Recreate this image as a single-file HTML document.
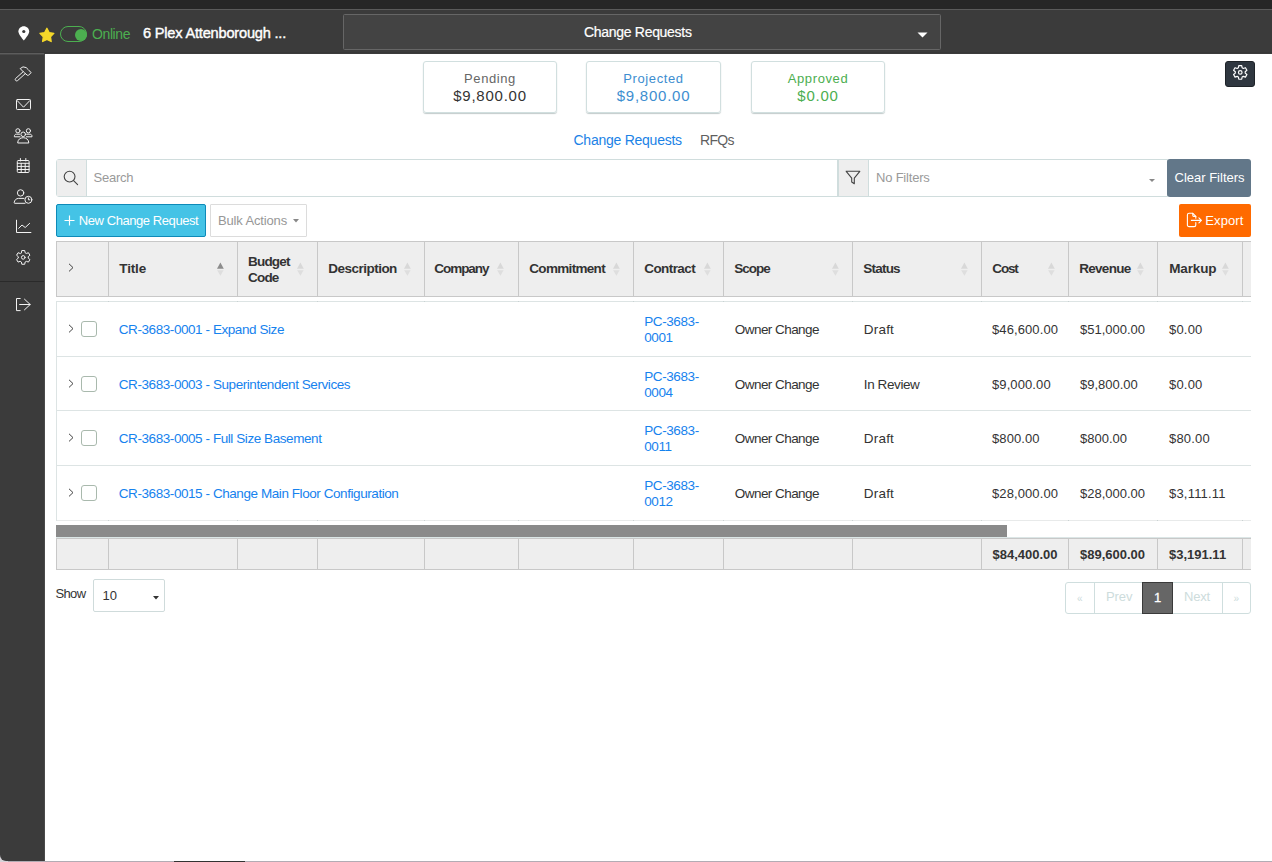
<!DOCTYPE html>
<html><head><meta charset="utf-8">
<style>
html,body{margin:0;padding:0;}
body{width:1272px;height:862px;overflow:hidden;position:relative;background:#fff;font-family:"Liberation Sans", sans-serif;}
.a{position:absolute;box-sizing:border-box;}
.t{position:absolute;white-space:nowrap;font-family:"Liberation Sans", sans-serif;}
svg{position:absolute;overflow:visible;}
</style></head><body>
<div class="a" style="left:0px;top:0px;width:1272px;height:9px;background:#262626"></div>
<div class="a" style="left:0px;top:9px;width:1272px;height:1px;background:#5a5a5a"></div>
<div class="a" style="left:0px;top:10px;width:1272px;height:44px;background:#3b3b3b"></div>
<div class="a" style="left:0px;top:52px;width:1272px;height:1px;background:#373737"></div>
<svg style="left:17.6px;top:25.8px" width="12" height="15" viewBox="0 0 12 15"><path d="M5.8 0.3C2.8 0.3 0.4 2.6 0.4 5.6 0.4 8.6 5.8 14.5 5.8 14.5S11.2 8.6 11.2 5.6C11.2 2.6 8.8 0.3 5.8 0.3Z" fill="#fff"/><circle cx="5.8" cy="5.5" r="1.6" fill="#3b3b3b"/></svg>
<svg style="left:38.5px;top:27px" width="16" height="16" viewBox="0 0 16 16"><path d="M7.90 1.30 L10.13 5.53 L14.84 6.34 L11.51 9.77 L12.19 14.51 L7.90 12.40 L3.61 14.51 L4.29 9.77 L0.96 6.34 L5.67 5.53Z" fill="#f5d82a" stroke="#f5d82a" stroke-width="1.3" stroke-linejoin="round"/></svg>
<div class="a" style="left:60px;top:26px;width:27px;height:16px;border:1.3px solid #4caf50;border-radius:8px"></div>
<div class="a" style="left:74.5px;top:28.5px;width:12.0px;height:12.0px;background:#4caf50;border-radius:50%"></div>
<div class="t " style="left:92px;top:27.15px;font-size:14px;line-height:14px;color:#4caf50;font-weight:normal;letter-spacing:-0.4px;">Online</div>
<div class="t " style="left:143px;top:25.64px;font-size:14.6px;line-height:14.6px;color:#ffffff;font-weight:normal;letter-spacing:-0.2px;-webkit-text-stroke:0.4px #fff;">6 Plex Attenborough ...</div>
<div class="a" style="left:343px;top:14px;width:598px;height:36px;background:#434343;border:1px solid #666;border-radius:1.5px"></div>
<div class="t " style="left:584px;top:25.15px;font-size:14px;line-height:14px;color:#ffffff;font-weight:normal;letter-spacing:-0.3px;-webkit-text-stroke:0.2px #fff;">Change Requests</div>
<svg style="left:917px;top:32px" width="11" height="6" viewBox="0 0 11 6"><path d="M0.5 0.5H10.5L5.5 5.5Z" fill="#fff"/></svg>
<div class="a" style="left:0px;top:856px;width:10px;height:6px;background:#d6d3d8"></div>
<div class="a" style="left:0px;top:53px;width:44px;height:808px;background:#3b3b3b;border-bottom-left-radius:6px"></div>
<div class="a" style="left:0px;top:53px;width:44px;height:1px;background:#5c5c5c"></div>
<div class="a" style="left:0px;top:54px;width:44px;height:1px;background:#4a4a4a"></div>
<div class="a" style="left:44px;top:54px;width:1px;height:807px;background:#4a4a4a"></div>
<div class="a" style="left:0px;top:281px;width:44px;height:1px;background:#2a2a2a"></div>
<svg style="left:12px;top:63px" width="24" height="21" viewBox="0 0 24 21"><g fill="none" stroke="#f2f2f2" stroke-width="1" stroke-linecap="round" stroke-linejoin="round"><path d="M11.2 8.7L3.5 15.6Q2.8 16.6 3.7 17.5Q4.6 18.3 5.6 17.6L13.3 10.6"/><path d="M11.2 8.7L8.2 5.6Q10.8 2.6 14.2 4.6L16.3 6.7 17 7.6 19.2 9.5 16.5 12.3 15.5 12.3 13.3 10.6Z"/></g></svg>
<svg style="left:12px;top:94px" width="24" height="22" viewBox="0 0 24 22"><g fill="none" stroke="#f2f2f2" stroke-width="1" stroke-linecap="round" stroke-linejoin="round"><rect x="4.5" y="5.5" width="14" height="10" rx="0.8"/><path d="M5.2 6.6L11.5 13.2 17.8 6.6"/></g></svg>
<svg style="left:10px;top:124px" width="26" height="24" viewBox="0 0 26 24"><g fill="none" stroke="#f2f2f2" stroke-width="1" stroke-linecap="round" stroke-linejoin="round"><circle cx="7.9" cy="6.8" r="2.1"/><circle cx="18.4" cy="6.8" r="2.1"/><circle cx="13.2" cy="10.3" r="2.3"/><path d="M9.6 10.2H6.3C5.2 10.2 4.4 11 4.4 12.2V12.8H10"/><path d="M16.6 10.2H20C21.1 10.2 22 11 22 12.2V12.8H16.4"/><path d="M7.7 18.6C7.7 15.6 10.2 13.7 13.2 13.7S18.8 15.6 18.8 18.6Z"/></g></svg>
<svg style="left:11px;top:154px" width="24" height="22" viewBox="0 0 24 22"><g fill="none" stroke="#f2f2f2" stroke-width="1" stroke-linecap="round" stroke-linejoin="round"><rect x="6.3" y="6.5" width="11.8" height="12" rx="1"/><path d="M9.4 4.5V7M14.8 4.5V7M6.3 9.3H18.1M6.3 12.4H18.1M6.3 15.5H18.1M10.2 9.3V18.5M14.2 9.3V18.5"/></g></svg>
<svg style="left:10px;top:185px" width="26" height="22" viewBox="0 0 26 22"><g fill="none" stroke="#f2f2f2" stroke-width="1" stroke-linecap="round" stroke-linejoin="round"><circle cx="10.6" cy="7.9" r="3.2"/><path d="M15 18.3H4.6C4.3 18.3 4.2 18 4.2 17.6C4.4 15.2 6.2 13.4 8.5 13.4H14"/><circle cx="18.4" cy="14.8" r="3.5"/><path d="M18.4 12.9V14.8H19.8"/></g></svg>
<svg style="left:11px;top:215px" width="24" height="22" viewBox="0 0 24 22"><g fill="none" stroke="#f2f2f2" stroke-width="1" stroke-linecap="round" stroke-linejoin="round"><path d="M5.5 5.2V17.5H19.9"/><path d="M7.7 13.3L11 10 14.2 12.5 18.6 8.4"/></g></svg>
<svg style="left:11px;top:246px" width="24" height="22" viewBox="0 0 24 22"><g fill="none" stroke="#f2f2f2" stroke-width="1" stroke-linecap="round" stroke-linejoin="round"><path d="M10.38 6.76 L10.79 4.55 L13.71 4.55 L14.12 6.76 L15.33 7.46 L17.45 6.72 L18.91 9.24 L17.20 10.70 L17.20 12.10 L18.91 13.56 L17.45 16.08 L15.33 15.34 L14.12 16.04 L13.71 18.25 L10.79 18.25 L10.38 16.04 L9.17 15.34 L7.05 16.08 L5.59 13.56 L7.30 12.10 L7.30 10.70 L5.59 9.24 L7.05 6.72 L9.17 7.46Z"/><circle cx="12.25" cy="11.4" r="1.8"/></g></svg>
<svg style="left:11px;top:293px" width="24" height="22" viewBox="0 0 24 22"><g fill="none" stroke="#f2f2f2" stroke-width="1" stroke-linecap="round" stroke-linejoin="round"><path d="M9.2 5.5H5.5V17.6H9.2"/><path d="M8.6 11.5H19.2M13.5 6.2L19.2 11.5 13.5 16.8"/></g></svg>
<div class="a" style="left:1225px;top:61px;width:30px;height:26px;background:#2f3740;border:1px solid #1e2328;border-radius:3px"></div>
<svg style="left:1228px;top:60.5px" width="24" height="22" viewBox="0 0 24 22"><g fill="none" stroke="#fff" stroke-width="1.2" stroke-linejoin="round"><path d="M10.38 6.76 L10.79 4.55 L13.71 4.55 L14.12 6.76 L15.33 7.46 L17.45 6.72 L18.91 9.24 L17.20 10.70 L17.20 12.10 L18.91 13.56 L17.45 16.08 L15.33 15.34 L14.12 16.04 L13.71 18.25 L10.79 18.25 L10.38 16.04 L9.17 15.34 L7.05 16.08 L5.59 13.56 L7.30 12.10 L7.30 10.70 L5.59 9.24 L7.05 6.72 L9.17 7.46Z"/><circle cx="12.25" cy="11.4" r="1.8"/></g></svg>
<div class="a" style="left:423px;top:61px;width:134px;height:52px;border:1px solid #d1dfdf;border-radius:3px;box-shadow:0 1px 1px rgba(80,105,105,0.35)"></div>
<div class="t" style="left:423px;width:134px;text-align:center;top:71.60px;font-size:13px;line-height:13px;color:#666666;letter-spacing:0.6px">Pending</div>
<div class="t" style="left:423px;width:134px;text-align:center;top:88.20px;font-size:15px;line-height:15px;color:#333333;letter-spacing:0.75px">$9,800.00</div>
<div class="a" style="left:586px;top:61px;width:135px;height:52px;border:1px solid #d1dfdf;border-radius:3px;box-shadow:0 1px 1px rgba(80,105,105,0.35)"></div>
<div class="t" style="left:586px;width:135px;text-align:center;top:71.60px;font-size:13px;line-height:13px;color:#3d8ed0;letter-spacing:0.6px">Projected</div>
<div class="t" style="left:586px;width:135px;text-align:center;top:88.20px;font-size:15px;line-height:15px;color:#3d8ed0;letter-spacing:0.75px">$9,800.00</div>
<div class="a" style="left:751px;top:61px;width:134px;height:52px;border:1px solid #d1dfdf;border-radius:3px;box-shadow:0 1px 1px rgba(80,105,105,0.35)"></div>
<div class="t" style="left:751px;width:134px;text-align:center;top:71.60px;font-size:13px;line-height:13px;color:#4cae50;letter-spacing:0.6px">Approved</div>
<div class="t" style="left:751px;width:134px;text-align:center;top:88.20px;font-size:15px;line-height:15px;color:#4cae50;letter-spacing:0.75px">$0.00</div>
<div class="t " style="left:573.5px;top:132.75px;font-size:14px;line-height:14px;color:#1b82e6;font-weight:normal;letter-spacing:-0.25px;">Change Requests</div>
<div class="t " style="left:700px;top:132.75px;font-size:14px;line-height:14px;color:#5f5f5f;font-weight:normal;letter-spacing:-0.65px;">RFQs</div>
<div class="a" style="left:56px;top:159px;width:1112px;height:38px;border:1px solid #d0dddd;border-radius:3px 0 0 3px"></div>
<div class="a" style="left:57px;top:160px;width:30px;height:36px;background:#eeeeee;border-right:1px solid #d0dddd"></div>
<svg style="left:63px;top:170px" width="16" height="16" viewBox="0 0 16 16"><g fill="none" stroke="#444" stroke-width="1.1" stroke-linecap="round"><circle cx="6.6" cy="6.6" r="5.4"/><path d="M10.6 10.6L14.6 14.6"/></g></svg>
<div class="t " style="left:93.5px;top:170.80px;font-size:13px;line-height:13px;color:#9a9a9a;font-weight:normal;letter-spacing:-0.25px;">Search</div>
<div class="a" style="left:837px;top:160px;width:32px;height:36px;background:#eeeeee;border-left:2px solid #d0dddd;border-right:1px solid #d0dddd"></div>
<svg style="left:845px;top:170px" width="16" height="15" viewBox="0 0 16 15"><path d="M1.2 1.3H14.8L9.3 8.2V13.8L6.7 12V8.2Z" fill="none" stroke="#444" stroke-width="1.1" stroke-linejoin="round"/></svg>
<div class="t " style="left:876px;top:170.80px;font-size:13px;line-height:13px;color:#9a9a9a;font-weight:normal;letter-spacing:-0.2px;">No Filters</div>
<svg style="left:1149px;top:179px" width="6" height="3" viewBox="0 0 6 3"><path d="M0 0H6L3 3Z" fill="#888"/></svg>
<div class="a" style="left:1167px;top:159px;width:84px;height:38px;background:#627789;border-radius:3px"></div>
<div class="t " style="left:1174.5px;top:171.30px;font-size:13px;line-height:13px;color:#ffffff;font-weight:normal;letter-spacing:0px;">Clear Filters</div>
<div class="a" style="left:56px;top:204px;width:150px;height:33px;background:#44c3e6;border:1px solid #0e8ab8;border-radius:2px"></div>
<svg style="left:64px;top:215px" width="11" height="11" viewBox="0 0 11 11"><path d="M5.5 0.5V10.5M0.5 5.5H10.5" stroke="#fff" stroke-width="1.15"/></svg>
<div class="t " style="left:78.8px;top:213.80px;font-size:13px;line-height:13px;color:#ffffff;font-weight:normal;letter-spacing:-0.43px;">New Change Request</div>
<div class="a" style="left:210px;top:204px;width:97px;height:33px;border:1px solid #dcdcdc;border-radius:1px"></div>
<div class="t " style="left:218px;top:213.80px;font-size:13px;line-height:13px;color:#979797;font-weight:normal;letter-spacing:-0.15px;">Bulk Actions</div>
<svg style="left:293px;top:218.5px" width="6" height="3.5" viewBox="0 0 6 3.5"><path d="M0 0H6L3 3.5Z" fill="#888"/></svg>
<div class="a" style="left:1179px;top:204px;width:72px;height:33px;background:#ff6a00;border-radius:2px"></div>
<svg style="left:1186px;top:212px" width="17" height="16" viewBox="0 0 17 16"><g fill="none" stroke="#fff" stroke-width="1.1" stroke-linejoin="round" stroke-linecap="round"><path d="M9.8 10.6V12.9C9.8 14 9.1 14.6 8.1 14.6H3.1C2.1 14.6 1.4 14 1.4 12.9V3C1.4 1.9 2.1 1.3 3.1 1.3H6.8L9.8 4.4V6.2"/><path d="M6.8 1.3V3.6C6.8 4.1 7.1 4.4 7.6 4.4H9.8"/><path d="M5.4 8.4H15.4M12.9 5.9L15.4 8.4 12.9 10.9"/></g></svg>
<div class="t " style="left:1205.3px;top:213.80px;font-size:13px;line-height:13px;color:#ffffff;font-weight:normal;letter-spacing:0.1px;">Export</div>
<div class="a" style="left:56px;top:241px;width:1195px;height:56px;background:#eeeeee;border-top:1px solid #c8c8c8;border-bottom:1px solid #c8c8c8;border-left:1px solid #c8c8c8"></div>
<div class="a" style="left:108px;top:242px;width:1px;height:54px;background:#c8c8c8"></div>
<div class="a" style="left:237px;top:242px;width:1px;height:54px;background:#c8c8c8"></div>
<div class="a" style="left:317px;top:242px;width:1px;height:54px;background:#c8c8c8"></div>
<div class="a" style="left:424px;top:242px;width:1px;height:54px;background:#c8c8c8"></div>
<div class="a" style="left:518px;top:242px;width:1px;height:54px;background:#c8c8c8"></div>
<div class="a" style="left:633px;top:242px;width:1px;height:54px;background:#c8c8c8"></div>
<div class="a" style="left:723px;top:242px;width:1px;height:54px;background:#c8c8c8"></div>
<div class="a" style="left:852px;top:242px;width:1px;height:54px;background:#c8c8c8"></div>
<div class="a" style="left:981px;top:242px;width:1px;height:54px;background:#c8c8c8"></div>
<div class="a" style="left:1068px;top:242px;width:1px;height:54px;background:#c8c8c8"></div>
<div class="a" style="left:1157px;top:242px;width:1px;height:54px;background:#c8c8c8"></div>
<div class="a" style="left:1242px;top:242px;width:1px;height:54px;background:#c8c8c8"></div>
<svg style="left:68px;top:263px" width="6" height="10" viewBox="0 0 6 10"><path d="M1 0.8L5 4.6 1 8.4" fill="none" stroke="#3a3a3a" stroke-width="0.95"/></svg>
<div class="t " style="left:119.3px;top:262.37px;font-size:13.5px;line-height:13.5px;color:#333;font-weight:bold;letter-spacing:-0.15000000000000002px;">Title</div>
<svg style="left:216.5px;top:262px" width="7" height="14" viewBox="0 0 7 14"><path d="M0 6.7H6.8L3.4 0.4Z" fill="#8c8c8c"/><path d="M0.2 8.2H6.6L3.4 13.8Z" fill="#dedede"/></svg>
<svg style="left:296.5px;top:262px" width="7" height="14" viewBox="0 0 7 14"><path d="M0 6.7H6.8L3.4 0.4Z" fill="#d8d8d8"/><path d="M0.2 8.2H6.6L3.4 13.8Z" fill="#dedede"/></svg>
<div class="t " style="left:328.3px;top:262.37px;font-size:13.5px;line-height:13.5px;color:#333;font-weight:bold;letter-spacing:-0.52px;">Description</div>
<svg style="left:403.5px;top:262px" width="7" height="14" viewBox="0 0 7 14"><path d="M0 6.7H6.8L3.4 0.4Z" fill="#d8d8d8"/><path d="M0.2 8.2H6.6L3.4 13.8Z" fill="#dedede"/></svg>
<div class="t " style="left:434.3px;top:262.37px;font-size:13.5px;line-height:13.5px;color:#333;font-weight:bold;letter-spacing:-1.05px;">Company</div>
<svg style="left:496.5px;top:262px" width="7" height="14" viewBox="0 0 7 14"><path d="M0 6.7H6.8L3.4 0.4Z" fill="#d8d8d8"/><path d="M0.2 8.2H6.6L3.4 13.8Z" fill="#dedede"/></svg>
<div class="t " style="left:529.3px;top:262.37px;font-size:13.5px;line-height:13.5px;color:#333;font-weight:bold;letter-spacing:-0.68px;">Commitment</div>
<svg style="left:612.5px;top:262px" width="7" height="14" viewBox="0 0 7 14"><path d="M0 6.7H6.8L3.4 0.4Z" fill="#d8d8d8"/><path d="M0.2 8.2H6.6L3.4 13.8Z" fill="#dedede"/></svg>
<div class="t " style="left:644.3px;top:262.37px;font-size:13.5px;line-height:13.5px;color:#333;font-weight:bold;letter-spacing:-0.5900000000000001px;">Contract</div>
<svg style="left:703.5px;top:262px" width="7" height="14" viewBox="0 0 7 14"><path d="M0 6.7H6.8L3.4 0.4Z" fill="#d8d8d8"/><path d="M0.2 8.2H6.6L3.4 13.8Z" fill="#dedede"/></svg>
<div class="t " style="left:734.3px;top:262.37px;font-size:13.5px;line-height:13.5px;color:#333;font-weight:bold;letter-spacing:-1.0px;">Scope</div>
<svg style="left:831.5px;top:262px" width="7" height="14" viewBox="0 0 7 14"><path d="M0 6.7H6.8L3.4 0.4Z" fill="#d8d8d8"/><path d="M0.2 8.2H6.6L3.4 13.8Z" fill="#dedede"/></svg>
<div class="t " style="left:863.3px;top:262.37px;font-size:13.5px;line-height:13.5px;color:#333;font-weight:bold;letter-spacing:-0.79px;">Status</div>
<svg style="left:960.5px;top:262px" width="7" height="14" viewBox="0 0 7 14"><path d="M0 6.7H6.8L3.4 0.4Z" fill="#d8d8d8"/><path d="M0.2 8.2H6.6L3.4 13.8Z" fill="#dedede"/></svg>
<div class="t " style="left:992.3px;top:262.37px;font-size:13.5px;line-height:13.5px;color:#333;font-weight:bold;letter-spacing:-1.15px;">Cost</div>
<svg style="left:1047.5px;top:262px" width="7" height="14" viewBox="0 0 7 14"><path d="M0 6.7H6.8L3.4 0.4Z" fill="#d8d8d8"/><path d="M0.2 8.2H6.6L3.4 13.8Z" fill="#dedede"/></svg>
<div class="t " style="left:1079.3px;top:262.37px;font-size:13.5px;line-height:13.5px;color:#333;font-weight:bold;letter-spacing:-0.73px;">Revenue</div>
<svg style="left:1136.5px;top:262px" width="7" height="14" viewBox="0 0 7 14"><path d="M0 6.7H6.8L3.4 0.4Z" fill="#d8d8d8"/><path d="M0.2 8.2H6.6L3.4 13.8Z" fill="#dedede"/></svg>
<div class="t " style="left:1169.3px;top:262.37px;font-size:13.5px;line-height:13.5px;color:#333;font-weight:bold;letter-spacing:-0.16999999999999998px;">Markup</div>
<svg style="left:1221.5px;top:262px" width="7" height="14" viewBox="0 0 7 14"><path d="M0 6.7H6.8L3.4 0.4Z" fill="#d8d8d8"/><path d="M0.2 8.2H6.6L3.4 13.8Z" fill="#dedede"/></svg>
<div class="t " style="left:248px;top:254.57px;font-size:13.5px;line-height:13.5px;color:#333;font-weight:bold;letter-spacing:-0.81px;">Budget</div>
<div class="t " style="left:248px;top:270.57px;font-size:13.5px;line-height:13.5px;color:#333;font-weight:bold;letter-spacing:-0.81px;">Code</div>
<div class="a" style="left:56px;top:301px;width:1px;height:220px;background:#dde4e4"></div>
<div class="a" style="left:56px;top:301px;width:1195px;height:1px;background:#dde4e4"></div>
<div class="a" style="left:56px;top:356px;width:1195px;height:1px;background:#dde4e4"></div>
<div class="a" style="left:56px;top:410px;width:1195px;height:1px;background:#dde4e4"></div>
<div class="a" style="left:56px;top:465px;width:1195px;height:1px;background:#dde4e4"></div>
<div class="a" style="left:56px;top:520px;width:1195px;height:1px;background:#dde4e4"></div>
<div class="a" style="left:57px;top:520px;width:1194px;height:1px;background:#e8eaea"></div>
<div class="a" style="left:56px;top:537px;width:1195px;height:1px;background:#dbe6e6"></div>
<div class="a" style="left:108px;top:301px;width:1px;height:1px;background:#c9d2d2"></div>
<div class="a" style="left:237px;top:301px;width:1px;height:1px;background:#c9d2d2"></div>
<div class="a" style="left:317px;top:301px;width:1px;height:1px;background:#c9d2d2"></div>
<div class="a" style="left:424px;top:301px;width:1px;height:1px;background:#c9d2d2"></div>
<div class="a" style="left:518px;top:301px;width:1px;height:1px;background:#c9d2d2"></div>
<div class="a" style="left:633px;top:301px;width:1px;height:1px;background:#c9d2d2"></div>
<div class="a" style="left:723px;top:301px;width:1px;height:1px;background:#c9d2d2"></div>
<div class="a" style="left:852px;top:301px;width:1px;height:1px;background:#c9d2d2"></div>
<div class="a" style="left:981px;top:301px;width:1px;height:1px;background:#c9d2d2"></div>
<div class="a" style="left:1068px;top:301px;width:1px;height:1px;background:#c9d2d2"></div>
<div class="a" style="left:1157px;top:301px;width:1px;height:1px;background:#c9d2d2"></div>
<div class="a" style="left:1242px;top:301px;width:1px;height:1px;background:#c9d2d2"></div>
<div class="a" style="left:108px;top:520px;width:1px;height:1px;background:#c9d2d2"></div>
<div class="a" style="left:237px;top:520px;width:1px;height:1px;background:#c9d2d2"></div>
<div class="a" style="left:317px;top:520px;width:1px;height:1px;background:#c9d2d2"></div>
<div class="a" style="left:424px;top:520px;width:1px;height:1px;background:#c9d2d2"></div>
<div class="a" style="left:518px;top:520px;width:1px;height:1px;background:#c9d2d2"></div>
<div class="a" style="left:633px;top:520px;width:1px;height:1px;background:#c9d2d2"></div>
<div class="a" style="left:723px;top:520px;width:1px;height:1px;background:#c9d2d2"></div>
<div class="a" style="left:852px;top:520px;width:1px;height:1px;background:#c9d2d2"></div>
<div class="a" style="left:981px;top:520px;width:1px;height:1px;background:#c9d2d2"></div>
<div class="a" style="left:1068px;top:520px;width:1px;height:1px;background:#c9d2d2"></div>
<div class="a" style="left:1157px;top:520px;width:1px;height:1px;background:#c9d2d2"></div>
<div class="a" style="left:1242px;top:520px;width:1px;height:1px;background:#c9d2d2"></div>
<svg style="left:68px;top:324.2px" width="6" height="10" viewBox="0 0 6 10"><path d="M1 0.8L5 4.6 1 8.4" fill="none" stroke="#3a3a3a" stroke-width="0.95"/></svg>
<div class="a" style="left:81px;top:321px;width:16px;height:16px;border:1px solid #a9b9ad;border-radius:3px"></div>
<div class="t " style="left:118.8px;top:322.77px;font-size:13.5px;line-height:13.5px;color:#1682ee;font-weight:normal;letter-spacing:-0.43000000000000005px;">CR-3683-0001 - Expand Size</div>
<div class="t " style="left:644.2px;top:314.77px;font-size:13.5px;line-height:13.5px;color:#1682ee;font-weight:normal;letter-spacing:-0.4px;">PC-3683-</div>
<div class="t " style="left:644.2px;top:331.07px;font-size:13.5px;line-height:13.5px;color:#1682ee;font-weight:normal;letter-spacing:-0.4px;">0001</div>
<div class="t " style="left:734.8px;top:322.77px;font-size:13.5px;line-height:13.5px;color:#333333;font-weight:normal;letter-spacing:-0.55px;">Owner Change</div>
<div class="t " style="left:863.8px;top:322.77px;font-size:13.5px;line-height:13.5px;color:#333333;font-weight:normal;letter-spacing:0.19999999999999996px;">Draft</div>
<div class="t " style="left:992px;top:323.20px;font-size:13px;line-height:13px;color:#333333;font-weight:normal;letter-spacing:0.1px;">$46,600.00</div>
<div class="t " style="left:1080px;top:323.20px;font-size:13px;line-height:13px;color:#333333;font-weight:normal;letter-spacing:0px;">$51,000.00</div>
<div class="t " style="left:1169px;top:323.20px;font-size:13px;line-height:13px;color:#333333;font-weight:normal;letter-spacing:0.2px;">$0.00</div>
<svg style="left:68px;top:379.2px" width="6" height="10" viewBox="0 0 6 10"><path d="M1 0.8L5 4.6 1 8.4" fill="none" stroke="#3a3a3a" stroke-width="0.95"/></svg>
<div class="a" style="left:81px;top:376px;width:16px;height:16px;border:1px solid #a9b9ad;border-radius:3px"></div>
<div class="t " style="left:118.8px;top:377.77px;font-size:13.5px;line-height:13.5px;color:#1682ee;font-weight:normal;letter-spacing:-0.43000000000000005px;">CR-3683-0003 - Superintendent Services</div>
<div class="t " style="left:644.2px;top:369.77px;font-size:13.5px;line-height:13.5px;color:#1682ee;font-weight:normal;letter-spacing:-0.4px;">PC-3683-</div>
<div class="t " style="left:644.2px;top:386.07px;font-size:13.5px;line-height:13.5px;color:#1682ee;font-weight:normal;letter-spacing:-0.4px;">0004</div>
<div class="t " style="left:734.8px;top:377.77px;font-size:13.5px;line-height:13.5px;color:#333333;font-weight:normal;letter-spacing:-0.55px;">Owner Change</div>
<div class="t " style="left:863.8px;top:377.77px;font-size:13.5px;line-height:13.5px;color:#333333;font-weight:normal;letter-spacing:-0.4px;">In Review</div>
<div class="t " style="left:992px;top:378.20px;font-size:13px;line-height:13px;color:#333333;font-weight:normal;letter-spacing:0.1px;">$9,000.00</div>
<div class="t " style="left:1080px;top:378.20px;font-size:13px;line-height:13px;color:#333333;font-weight:normal;letter-spacing:0px;">$9,800.00</div>
<div class="t " style="left:1169px;top:378.20px;font-size:13px;line-height:13px;color:#333333;font-weight:normal;letter-spacing:0.2px;">$0.00</div>
<svg style="left:68px;top:433.2px" width="6" height="10" viewBox="0 0 6 10"><path d="M1 0.8L5 4.6 1 8.4" fill="none" stroke="#3a3a3a" stroke-width="0.95"/></svg>
<div class="a" style="left:81px;top:430px;width:16px;height:16px;border:1px solid #a9b9ad;border-radius:3px"></div>
<div class="t " style="left:118.8px;top:431.77px;font-size:13.5px;line-height:13.5px;color:#1682ee;font-weight:normal;letter-spacing:-0.43000000000000005px;">CR-3683-0005 - Full Size Basement</div>
<div class="t " style="left:644.2px;top:423.77px;font-size:13.5px;line-height:13.5px;color:#1682ee;font-weight:normal;letter-spacing:-0.4px;">PC-3683-</div>
<div class="t " style="left:644.2px;top:440.07px;font-size:13.5px;line-height:13.5px;color:#1682ee;font-weight:normal;letter-spacing:-0.4px;">0011</div>
<div class="t " style="left:734.8px;top:431.77px;font-size:13.5px;line-height:13.5px;color:#333333;font-weight:normal;letter-spacing:-0.55px;">Owner Change</div>
<div class="t " style="left:863.8px;top:431.77px;font-size:13.5px;line-height:13.5px;color:#333333;font-weight:normal;letter-spacing:0.19999999999999996px;">Draft</div>
<div class="t " style="left:992px;top:432.20px;font-size:13px;line-height:13px;color:#333333;font-weight:normal;letter-spacing:0.1px;">$800.00</div>
<div class="t " style="left:1080px;top:432.20px;font-size:13px;line-height:13px;color:#333333;font-weight:normal;letter-spacing:0px;">$800.00</div>
<div class="t " style="left:1169px;top:432.20px;font-size:13px;line-height:13px;color:#333333;font-weight:normal;letter-spacing:0.2px;">$80.00</div>
<svg style="left:68px;top:488.2px" width="6" height="10" viewBox="0 0 6 10"><path d="M1 0.8L5 4.6 1 8.4" fill="none" stroke="#3a3a3a" stroke-width="0.95"/></svg>
<div class="a" style="left:81px;top:485px;width:16px;height:16px;border:1px solid #a9b9ad;border-radius:3px"></div>
<div class="t " style="left:118.8px;top:486.77px;font-size:13.5px;line-height:13.5px;color:#1682ee;font-weight:normal;letter-spacing:-0.43000000000000005px;">CR-3683-0015 - Change Main Floor Configuration</div>
<div class="t " style="left:644.2px;top:478.77px;font-size:13.5px;line-height:13.5px;color:#1682ee;font-weight:normal;letter-spacing:-0.4px;">PC-3683-</div>
<div class="t " style="left:644.2px;top:495.07px;font-size:13.5px;line-height:13.5px;color:#1682ee;font-weight:normal;letter-spacing:-0.4px;">0012</div>
<div class="t " style="left:734.8px;top:486.77px;font-size:13.5px;line-height:13.5px;color:#333333;font-weight:normal;letter-spacing:-0.55px;">Owner Change</div>
<div class="t " style="left:863.8px;top:486.77px;font-size:13.5px;line-height:13.5px;color:#333333;font-weight:normal;letter-spacing:0.19999999999999996px;">Draft</div>
<div class="t " style="left:992px;top:487.20px;font-size:13px;line-height:13px;color:#333333;font-weight:normal;letter-spacing:0.1px;">$28,000.00</div>
<div class="t " style="left:1080px;top:487.20px;font-size:13px;line-height:13px;color:#333333;font-weight:normal;letter-spacing:0px;">$28,000.00</div>
<div class="t " style="left:1169px;top:487.20px;font-size:13px;line-height:13px;color:#333333;font-weight:normal;letter-spacing:0.2px;">$3,111.11</div>
<div class="a" style="left:56px;top:525px;width:951px;height:12px;background:#8a8a8a"></div>
<div class="a" style="left:56px;top:538px;width:1195px;height:32px;background:#eeeeee;border-top:1px solid #c8c8c8;border-bottom:1px solid #c8c8c8;border-left:1px solid #c8c8c8"></div>
<div class="a" style="left:108px;top:539px;width:1px;height:30px;background:#c8c8c8"></div>
<div class="a" style="left:237px;top:539px;width:1px;height:30px;background:#c8c8c8"></div>
<div class="a" style="left:317px;top:539px;width:1px;height:30px;background:#c8c8c8"></div>
<div class="a" style="left:424px;top:539px;width:1px;height:30px;background:#c8c8c8"></div>
<div class="a" style="left:518px;top:539px;width:1px;height:30px;background:#c8c8c8"></div>
<div class="a" style="left:633px;top:539px;width:1px;height:30px;background:#c8c8c8"></div>
<div class="a" style="left:723px;top:539px;width:1px;height:30px;background:#c8c8c8"></div>
<div class="a" style="left:852px;top:539px;width:1px;height:30px;background:#c8c8c8"></div>
<div class="a" style="left:981px;top:539px;width:1px;height:30px;background:#c8c8c8"></div>
<div class="a" style="left:1068px;top:539px;width:1px;height:30px;background:#c8c8c8"></div>
<div class="a" style="left:1157px;top:539px;width:1px;height:30px;background:#c8c8c8"></div>
<div class="a" style="left:1242px;top:539px;width:1px;height:30px;background:#c8c8c8"></div>
<div class="t " style="left:992.5px;top:547.60px;font-size:13px;line-height:13px;color:#333;font-weight:bold;letter-spacing:0px;">$84,400.00</div>
<div class="t " style="left:1080px;top:547.60px;font-size:13px;line-height:13px;color:#333;font-weight:bold;letter-spacing:0px;">$89,600.00</div>
<div class="t " style="left:1169px;top:547.60px;font-size:13px;line-height:13px;color:#333;font-weight:bold;letter-spacing:0px;">$3,191.11</div>
<div class="t " style="left:55.5px;top:586.80px;font-size:13px;line-height:13px;color:#333;font-weight:normal;letter-spacing:-0.65px;">Show</div>
<div class="a" style="left:93px;top:579px;width:72px;height:33px;border:1px solid #cfdbdb;border-radius:2px"></div>
<div class="t " style="left:102.5px;top:588.80px;font-size:13px;line-height:13px;color:#333;font-weight:normal;letter-spacing:0px;">10</div>
<svg style="left:153px;top:596px" width="6" height="3.5" viewBox="0 0 6 3.5"><path d="M0 0H6L3 3.5Z" fill="#333"/></svg>
<div class="a" style="left:1065px;top:582px;width:186px;height:32px;border:1px solid #cfdede;border-radius:3px"></div>
<div class="a" style="left:1094px;top:583px;width:1px;height:30px;background:#cfdede"></div>
<div class="a" style="left:1222px;top:583px;width:1px;height:30px;background:#cfdede"></div>
<div class="a" style="left:1142px;top:582px;width:31px;height:32px;background:#666666;border:1px solid #3a3a3a"></div>
<div class="t " style="left:1077px;top:593.53px;font-size:10px;line-height:10px;color:#cddcdc;font-weight:normal;letter-spacing:0px;">&laquo;</div>
<div class="t " style="left:1106px;top:590.00px;font-size:13px;line-height:13px;color:#cddcdc;font-weight:normal;letter-spacing:-0.1px;">Prev</div>
<div class="t " style="left:1154px;top:590.50px;font-size:13px;line-height:13px;color:#ffffff;font-weight:normal;letter-spacing:0px;-webkit-text-stroke:0.3px #fff;">1</div>
<div class="t " style="left:1184px;top:590.00px;font-size:13px;line-height:13px;color:#cddcdc;font-weight:normal;letter-spacing:-0.2px;">Next</div>
<div class="t " style="left:1233.5px;top:593.53px;font-size:10px;line-height:10px;color:#cddcdc;font-weight:normal;letter-spacing:0px;">&raquo;</div>
<div class="a" style="left:8px;top:861px;width:1264px;height:1px;background:#b2acb4"></div>
<div class="a" style="left:174px;top:861px;width:71px;height:1px;background:#333333"></div>
</body></html>
